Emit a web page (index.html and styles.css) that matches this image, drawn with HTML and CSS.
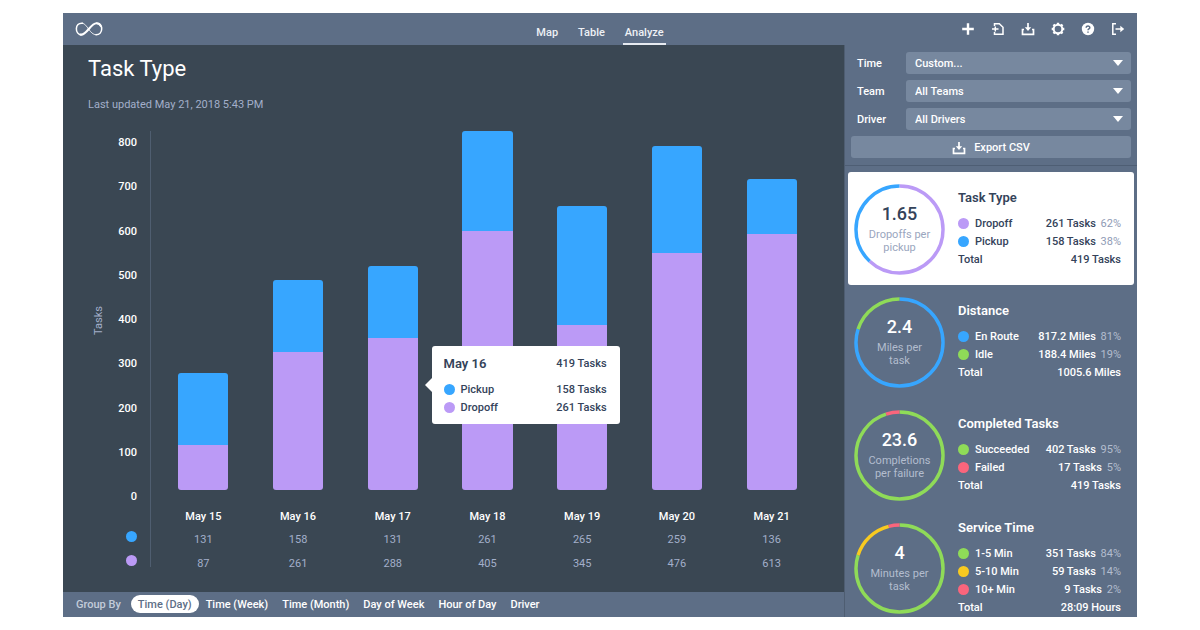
FILE: index.html
```html
<!DOCTYPE html>
<html lang="en">
<head>
<meta charset="utf-8">
<title>Analyze – Task Type</title>
<link rel="stylesheet" href="styles.css">
</head>
<body>
<div class="app">
  <header class="topbar">
    <a class="logo" href="#" aria-label="Home">
      <svg width="28" height="16" viewBox="0 0 28 16" fill="none" stroke="#fff" stroke-linecap="round"><path stroke-width="1" opacity=".8" d="M7.500 2.200c5 .6 7 11.600 13.500 11.600"/><path stroke-width="1.500" d="M7.500 2.200C-.5 1.200-.5 13.800 6.500 13.800M21.500 2.200c7 0 7 11.600-.5 11.600"/><path stroke-width="2.100" d="M5.500 13.600c6 1.200 10-11.400 16-11.400 2 0 3.500 1 4.200 2.600"/></svg>
    </a>
    <nav class="tabs">
      <a class="tab" href="#">Map</a>
      <a class="tab" href="#">Table</a>
      <a class="tab tab-active" href="#" aria-current="page">Analyze</a>
    </nav>
    <div class="tools">
      <button class="tool" aria-label="Add"><svg viewBox="0 0 14 14"><path d="M7 1.200v11.600M1.200 7h11.600" stroke-width="2.400"/></svg></button>
      <button class="tool" aria-label="Import"><svg viewBox="0 0 14 14"><path d="M3.500 4V1.700h4.800l3.700 3.600v7H3.500V10" stroke-width="1.500"/><path d="M1 7h6.500M4.300 4.600v4.800" stroke-width="1.500"/></svg></button>
      <button class="tool" aria-label="Download"><svg viewBox="0 0 14 14"><path d="M3 7.500H1.500v4.800h11V7.500H11M7 1v5" stroke-width="1.700"/><path d="M3.800 5.200h6.400L7 9z" fill="#fff" stroke="none"/></svg></button>
      <button class="tool" aria-label="Settings"><svg viewBox="0 0 14 14"><circle cx="7" cy="7" r="4.300" stroke-width="2"/><path d="M7 .7v1.800M7 11.500v1.800M.7 7h1.800M11.500 7h1.800M2.500 2.500l1.300 1.300M10.200 10.200l1.300 1.300M2.500 11.500l1.300-1.300M10.200 3.800l1.300-1.300" stroke-width="2.400"/></svg></button>
      <button class="tool" aria-label="Help"><svg viewBox="0 0 14 14"><circle cx="7" cy="7" r="6.200" fill="#fff" stroke="none"/><path d="M5.200 5.700c0-2.300 3.700-2.200 3.600 0C8.800 7 7 6.900 7 8.200M7 9.400v1.400" stroke="#5d6e86" stroke-width="1.500"/></svg></button>
      <button class="tool" aria-label="Log out"><svg viewBox="0 0 14 14"><path d="M5 1.700H1.800v10.600H5M4.500 7H11" stroke-width="1.500"/><path d="M9.300 3.800 13.200 7l-3.900 3.200z" fill="#fff" stroke="none"/></svg></button>
    </div>
  </header>

  <div class="body">
    <main class="report">
      <h1 class="title">Task Type</h1>
      <p class="updated">Last updated May 21, 2018 5:43 PM</p>

      <div class="chart">
        <div class="scale">
          <span class="scale-name">Tasks</span>
          <div class="scale-marks">
            <span>800</span><span>700</span><span>600</span><span>500</span><span>400</span><span>300</span><span>200</span><span>100</span><span>0</span>
          </div>
        </div>
        <div class="axis"></div>
        <div class="plot">
          <div class="slot"><div class="bar" style="height:32.600%"><i class="part pickup" style="height:61.500%"></i><i class="part dropoff"></i></div></div>
          <div class="slot"><div class="bar" style="height:58.400%"><i class="part pickup" style="height:34.400%"></i><i class="part dropoff"></i></div></div>
          <div class="slot"><div class="bar" style="height:62.400%"><i class="part pickup" style="height:32.200%"></i><i class="part dropoff"></i></div></div>
          <div class="slot"><div class="bar" style="height:100%"><i class="part pickup" style="height:27.900%"></i><i class="part dropoff"></i></div></div>
          <div class="slot"><div class="bar" style="height:79%"><i class="part pickup" style="height:41.900%"></i><i class="part dropoff"></i></div></div>
          <div class="slot"><div class="bar" style="height:95.800%"><i class="part pickup" style="height:31.200%"></i><i class="part dropoff"></i></div></div>
          <div class="slot"><div class="bar" style="height:86.600%"><i class="part pickup" style="height:17.700%"></i><i class="part dropoff"></i></div></div>

          <div class="tooltip" role="tooltip">
            <div class="tip-row tip-head"><strong>May 16</strong><span>419 Tasks</span></div>
            <div class="tip-row"><span class="key"><i class="dot pickup"></i>Pickup</span><span>158 Tasks</span></div>
            <div class="tip-row"><span class="key"><i class="dot dropoff"></i>Dropoff</span><span>261 Tasks</span></div>
          </div>
        </div>
        <table class="values">
          <thead>
            <tr><td></td><th scope="col">May 15</th><th scope="col">May 16</th><th scope="col">May 17</th><th scope="col">May 18</th><th scope="col">May 19</th><th scope="col">May 20</th><th scope="col">May 21</th></tr>
          </thead>
          <tbody>
            <tr><th scope="row" aria-label="Pickup"><i class="dot pickup"></i></th><td>131</td><td>158</td><td>131</td><td>261</td><td>265</td><td>259</td><td>136</td></tr>
            <tr><th scope="row" aria-label="Dropoff"><i class="dot dropoff"></i></th><td>87</td><td>261</td><td>288</td><td>405</td><td>345</td><td>476</td><td>613</td></tr>
          </tbody>
        </table>
      </div>

      <footer class="groupby">
        <span class="groupby-label">Group By</span>
        <button class="group group-active">Time (Day)</button>
        <button class="group">Time (Week)</button>
        <button class="group">Time (Month)</button>
        <button class="group">Day of Week</button>
        <button class="group">Hour of Day</button>
        <button class="group">Driver</button>
      </footer>
    </main>

    <aside class="side">
      <form class="filters">
        <div class="filter"><label for="time">Time</label><select id="time"><option>Custom...</option></select></div>
        <div class="filter"><label for="team">Team</label><select id="team"><option>All Teams</option></select></div>
        <div class="filter"><label for="driver">Driver</label><select id="driver"><option>All Drivers</option></select></div>
        <button class="export" type="button"><svg viewBox="0 0 14 14"><path d="M3 7.500H1.500v4.800h11V7.500H11M7 1v5" stroke-width="1.700"/><path d="M3.800 5.200h6.400L7 9z" fill="#fff" stroke="none"/></svg>Export CSV</button>
      </form>

      <div class="cards">
        <section class="card card-active">
          <div class="ring">
            <svg viewBox="0 0 92 92"><circle class="arc purple" cx="46" cy="46" r="44" pathLength="100" stroke-dasharray="62 38"/><circle class="arc blue" cx="46" cy="46" r="44" pathLength="100" stroke-dasharray="38 62" stroke-dashoffset="-62"/></svg>
            <div class="ring-text"><b>1.65</b><span>Dropoffs per pickup</span></div>
          </div>
          <div class="detail">
            <h2>Task Type</h2>
            <p class="line"><i class="dot dropoff"></i>Dropoff<span class="amount">261 Tasks <em>62%</em></span></p>
            <p class="line"><i class="dot pickup"></i>Pickup<span class="amount">158 Tasks <em>38%</em></span></p>
            <p class="line">Total<span class="amount">419 Tasks</span></p>
          </div>
        </section>

        <section class="card">
          <div class="ring">
            <svg viewBox="0 0 92 92"><circle class="arc blue" cx="46" cy="46" r="44" pathLength="100" stroke-dasharray="80 20"/><circle class="arc green" cx="46" cy="46" r="44" pathLength="100" stroke-dasharray="20 80" stroke-dashoffset="-80"/></svg>
            <div class="ring-text"><b>2.4</b><span>Miles per task</span></div>
          </div>
          <div class="detail">
            <h2>Distance</h2>
            <p class="line"><i class="dot pickup"></i>En Route<span class="amount">817.2 Miles <em>81%</em></span></p>
            <p class="line"><i class="dot good"></i>Idle<span class="amount">188.4 Miles <em>19%</em></span></p>
            <p class="line">Total<span class="amount">1005.6 Miles</span></p>
          </div>
        </section>

        <section class="card">
          <div class="ring">
            <svg viewBox="0 0 92 92"><circle class="arc green" cx="46" cy="46" r="44" pathLength="100" stroke-dasharray="95 5"/><circle class="arc red" cx="46" cy="46" r="44" pathLength="100" stroke-dasharray="5 95" stroke-dashoffset="-95"/></svg>
            <div class="ring-text"><b>23.6</b><span>Completions per failure</span></div>
          </div>
          <div class="detail">
            <h2>Completed Tasks</h2>
            <p class="line"><i class="dot good"></i>Succeeded<span class="amount">402 Tasks <em>95%</em></span></p>
            <p class="line"><i class="dot bad"></i>Failed<span class="amount">17 Tasks <em>5%</em></span></p>
            <p class="line">Total<span class="amount">419 Tasks</span></p>
          </div>
        </section>

        <section class="card">
          <div class="ring">
            <svg viewBox="0 0 92 92"><circle class="arc green" cx="46" cy="46" r="44" pathLength="100" stroke-dasharray="80 20"/><circle class="arc yellow" cx="46" cy="46" r="44" pathLength="100" stroke-dasharray="16 84" stroke-dashoffset="-80"/><circle class="arc red" cx="46" cy="46" r="44" pathLength="100" stroke-dasharray="4 96" stroke-dashoffset="-96"/></svg>
            <div class="ring-text"><b>4</b><span>Minutes per task</span></div>
          </div>
          <div class="detail">
            <h2>Service Time</h2>
            <p class="line"><i class="dot good"></i>1-5 Min<span class="amount">351 Tasks <em>84%</em></span></p>
            <p class="line"><i class="dot fair"></i>5-10 Min<span class="amount">59 Tasks <em>14%</em></span></p>
            <p class="line"><i class="dot bad"></i>10+ Min<span class="amount">9 Tasks <em>2%</em></span></p>
            <p class="line">Total<span class="amount">28:09 Hours</span></p>
          </div>
        </section>
      </div>
    </aside>
  </div>
</div>
</body>
</html>
```
FILE: styles.css
```css
:root {
  --slate: #5d6e86;
  --dark: #3a4753;
  --field: #77889f;
  --muted: #a3afca;
  --ink: #34435a;
  --blue: #37a6ff;
  --purple: #bb9af6;
  --green: #8fdb58;
  --yellow: #f8ca20;
  --red: #fa657c;
}

* { box-sizing: border-box; }

body {
  margin: 0;
  padding: 13px 63px;
  height: 100vh;
  background: #fff;
  color: #fff;
  font: 500 11px/16px Roboto, "Liberation Sans", sans-serif;
}

h1, h2, p { margin: 0; }
a { color: inherit; text-decoration: none; }
button, select { font: inherit; color: inherit; border: 0; }
button { background: none; padding: 0; }
svg { display: block; fill: none; }

.app {
  display: flex;
  flex-direction: column;
  height: 100%;
  overflow: hidden;
  background: var(--slate);
}

/* Top bar */
.topbar {
  display: grid;
  grid-template-columns: 1fr auto 1fr;
  height: 32px;
  padding: 0 12px;
}
.logo { align-self: center; justify-self: start; }
.tabs { display: flex; gap: 16px; }
.tab {
  padding: 12px 2px 2px;
  border-bottom: 2px solid transparent;
  color: #eef1f5;
}
.tab-active { border-color: #e6eaf0; }
.tools { display: flex; justify-content: flex-end; align-items: center; gap: 16px; }
.tool svg, .export svg { width: 14px; height: 14px; stroke: #fff; }

.body { display: flex; flex: 1; min-height: 0; }

/* Report */
.report {
  display: flex;
  flex-direction: column;
  flex: 1;
  min-width: 0;
  background: var(--dark);
}
.title { padding: 10px 25px 0; font-size: 22px; line-height: 28px; font-weight: 400; }
.updated { padding: 14px 25px 0; color: var(--muted); font-weight: 400; }

.chart {
  display: grid;
  grid-template: 1fr auto / 87px 1px 1fr;
  flex: 1;
  min-height: 0;
  margin: 18px 25px 20px 0;
}
.scale {
  display: flex;
  align-items: center;
  justify-content: space-between;
  margin: 4px 0 -15px;
  padding: 0 13px 0 28px;
}
.scale-name { writing-mode: vertical-rl; transform: rotate(180deg); color: var(--muted); font-weight: 400; }
.scale-marks {
  display: flex;
  flex-direction: column;
  justify-content: space-between;
  height: 100%;
  text-align: right;
}
.axis { grid-row: 1 / 3; grid-column: 2; margin-bottom: 5px; background: #4f5e70; }
.plot { position: relative; display: flex; padding-left: 5px; }
.slot { display: flex; flex: 1; justify-content: center; align-items: flex-end; }
.bar {
  display: flex;
  flex-direction: column;
  width: 53%;
  border-radius: 3px;
  overflow: hidden;
}
.part.dropoff { flex: 1; }
.pickup { background: var(--blue); }
.dropoff { background: var(--purple); }
.good { background: var(--green); }
.fair { background: var(--yellow); }
.bad { background: var(--red); }
.dot { display: inline-block; flex: none; width: 11px; height: 11px; border-radius: 50%; }

.values {
  grid-row: 2;
  grid-column: 1 / 4;
  width: 100%;
  table-layout: fixed;
  border-collapse: collapse;
  text-align: center;
}
.values th, .values td { padding: 0; font-weight: 500; }
.values thead th { height: 34px; padding-top: 20px; line-height: 14px; }
.values thead td { width: 93px; }
.values tbody td { height: 24px; padding-top: 8px; color: var(--muted); font-weight: 400; }
.values tbody th { padding-right: 19px; text-align: right; line-height: 0; }

.tooltip {
  position: absolute;
  left: 42%;
  top: 60%;
  width: 188px;
  padding: 9px 13px 7px 12px;
  border-radius: 3px;
  background: #fff;
  color: var(--ink);
}
.tooltip::before {
  content: "";
  position: absolute;
  left: -7px;
  top: 50%;
  margin-top: -7px;
  border: 7px solid transparent;
  border-left-width: 0;
  border-right-color: #fff;
}
.tip-row { display: flex; justify-content: space-between; line-height: 18px; }
.tip-head { margin-bottom: 8px; }
.tip-head strong { font-size: 13px; font-weight: 600; }
.key { display: flex; align-items: center; gap: 6px; }
.key .dot, .line .dot { margin-bottom: 2px; }

.groupby {
  display: flex;
  align-items: center;
  min-height: 25px;
  padding: 0 13px 1px;
  background: var(--slate);
}
.groupby-label { margin-right: 10px; padding-top: 1px; color: #c3ccda; }
.group { padding: 1px 7px 0; line-height: 17px; border-radius: 9px; }
.group-active { background: #fff; color: var(--slate); }

/* Side panel */
.side {
  display: flex;
  flex-direction: column;
  width: 293px;
  overflow: hidden;
  border-left: 1px solid #4e5d71;
}
.filters {
  display: flex;
  flex-direction: column;
  gap: 6px;
  padding: 7px 6px;
  border-bottom: 1px solid #4e5e74;
}
.filter { display: flex; align-items: center; padding-left: 6px; }
.filter label { width: 49px; padding-top: 2px; }
.filter select {
  flex: 1;
  height: 22px;
  padding: 2px 9px 0;
  border-radius: 3px;
  appearance: none;
  background: var(--field) url("data:image/svg+xml,%3Csvg xmlns='http://www.w3.org/2000/svg' width='10' height='6'%3E%3Cpath d='M0 0h10L5 6z' fill='white'/%3E%3C/svg%3E") no-repeat right 8px center;
}
.export {
  display: flex;
  align-items: center;
  justify-content: center;
  gap: 8px;
  height: 22px;
  padding-top: 1px;
  border-radius: 3px;
  background: var(--field);
}

.cards { padding: 6px 3px 0; }
.card {
  display: flex;
  align-items: center;
  gap: 13px;
  min-height: 113px;
  padding: 1px 13px 0 6px;
  border-radius: 3px;
}
.card-active { background: #fff; color: var(--ink); }
.ring { display: grid; flex: none; width: 91px; }
.ring > * { grid-area: 1 / 1; }
.arc { stroke-width: 3.500; transform: rotate(-90deg); transform-origin: center; }
.blue { stroke: var(--blue); }
.purple { stroke: var(--purple); }
.green { stroke: var(--green); }
.yellow { stroke: var(--yellow); }
.red { stroke: var(--red); }
.ring-text {
  display: flex;
  flex-direction: column;
  align-self: center;
  align-items: center;
  padding: 0 12px 1px;
  text-align: center;
}
.ring-text b { margin-bottom: 4px; font-size: 18px; line-height: 20px; font-weight: 500; }
.ring-text span { line-height: 13px; font-weight: 400; color: #b3bdce; }
.card-active .ring-text span { color: #9aa6be; }
.detail { flex: 1; }
.detail h2 { margin-bottom: 8px; font-size: 13px; line-height: 18px; font-weight: 600; }
.line { display: flex; align-items: center; line-height: 18px; }
.line .dot { margin-right: 6px; }
.amount { margin-left: auto; }
.amount em { margin-left: 2px; font-style: normal; font-weight: 400; color: #b3bdce; }
.card-active .amount em { color: #8f9bb5; }
```
